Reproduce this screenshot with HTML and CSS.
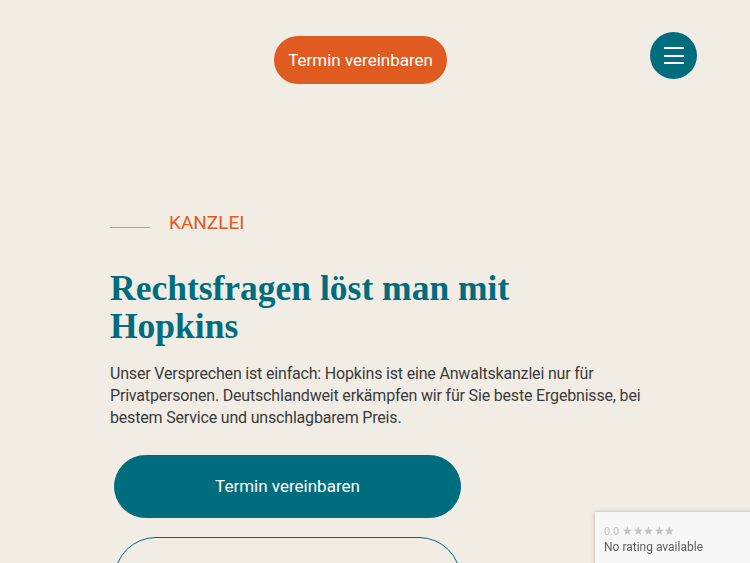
FILE: index.html
```html
<!DOCTYPE html>
<html lang="de">
<head>
    <meta charset="UTF-8">
    <meta name="viewport" content="width=device-width, initial-scale=1.0">
    <title>Hopkins Kanzlei</title>
    <link rel="stylesheet" href="styles.css">
</head>
<body>
    <header id="header">
        <a class="btn-cta" href="#">Termin vereinbaren</a>
        <button class="menu-toggle" aria-label="Menü">
            <span></span>
            <span></span>
            <span></span>
        </button>
    </header>

    <main id="hero">
        <div class="eyebrow">
            <span class="eyebrow-line"></span>
            <span class="eyebrow-text">KANZLEI</span>
        </div>

        <h1 class="hero-title">Rechtsfragen löst man mit Hopkins</h1>

        <p class="hero-text">Unser Versprechen ist einfach: Hopkins ist eine Anwaltskanzlei nur für Privatpersonen. Deutschlandweit erkämpfen wir für Sie beste Ergebnisse, bei bestem Service und unschlagbarem Preis.</p>

        <div class="hero-actions">
            <a class="btn-primary" href="#">Termin vereinbaren</a>
            <a class="btn-outline" href="#"><span class="btn-label">Rückruf anfordern</span></a>
        </div>
    </main>

    <!-- Bewertungs-Widget -->
    <div class="rating-badge">
        <div class="rating-score">0.0 <span class="rating-stars">★★★★★</span></div>
        <div class="rating-label">No rating available</div>
    </div>
</body>
</html>
```

FILE: styles.css
```css
body {
    margin: 0;
    padding: 0;
    background-color: #f1ece4;
    font-family: Roboto, "Liberation Sans", Arial, sans-serif;
    color: #3b3b3b;
    overflow: hidden;
}

#header {
    display: flex;
    justify-content: flex-end;
    align-items: flex-start;
    padding: 32px 53px 0 0;
}

.btn-cta {
    display: inline-block;
    margin-top: 4px;
    height: 48px;
    line-height: 48px;
    padding: 0 14px;
    border-radius: 24px;
    background-color: #e05b20;
    color: #fff;
    font-size: 17px;
    text-decoration: none;
}

.menu-toggle {
    display: flex;
    flex-direction: column;
    justify-content: center;
    align-items: center;
    gap: 5.5px;
    width: 47px;
    height: 47px;
    margin-left: 203px;
    padding: 0;
    border: none;
    border-radius: 50%;
    background-color: #006d7e;
    cursor: pointer;
}

.menu-toggle span {
    display: block;
    width: 20px;
    height: 2px;
    background-color: #fff;
}

#hero {
    padding: 127px 100px 0 110px;
}

.eyebrow {
    display: flex;
    align-items: center;
    gap: 19px;
    height: 24px;
}

.eyebrow-line {
    width: 40px;
    height: 1px;
    margin-top: 8px;
    background-color: #9ea6a6;
}

.eyebrow-text {
    color: #e05b20;
    font-size: 19px;
    line-height: 24px;
}

.hero-title {
    max-width: 520px;
    margin: 35px 0 0 0;
    font-family: "Liberation Serif", "Times New Roman", serif;
    font-weight: 700;
    font-size: 35.5px;
    line-height: 37.5px;
    color: #006d7e;
}

.hero-text {
    margin: 18px 0 0 0;
    font-size: 16px;
    line-height: 22px;
    letter-spacing: -0.18px;
}

.hero-actions {
    display: flex;
    flex-direction: column;
    gap: 19px;
    margin-top: 25.5px;
    padding-left: 4px;
}

.btn-primary,
.btn-outline {
    display: block;
    box-sizing: border-box;
    width: 347px;
    height: 63px;
    line-height: 61px;
    border-radius: 32px;
    border: 1px solid #006d7e;
    text-align: center;
    font-size: 17px;
    text-decoration: none;
}

.btn-primary {
    background-color: #006d7e;
    color: #fff;
}

.btn-outline {
    height: 84px;
    padding-top: 32px;
    line-height: 40px;
    border-radius: 42px;
    color: #006d7e;
}

.btn-label {
    display: inline-block;
    line-height: 20px;
    vertical-align: top;
    margin-top: 10px;
}

.rating-badge {
    position: fixed;
    left: 595px;
    top: 512px;
    width: 170px;
    height: 70px;
    padding: 12px 9px;
    box-sizing: border-box;
    background-color: #f7f7f7;
    box-shadow: 0 0 4px rgba(0, 0, 0, 0.25);
    font-family: Roboto, Arial, sans-serif;
}

.rating-score {
    font-size: 11px;
    line-height: 14px;
    color: #c2c2c2;
}

.rating-stars {
    font-size: 12px;
    letter-spacing: -0.5px;
}

.rating-label {
    font-size: 12px;
    line-height: 16px;
    color: #5f5f5f;
}
```
